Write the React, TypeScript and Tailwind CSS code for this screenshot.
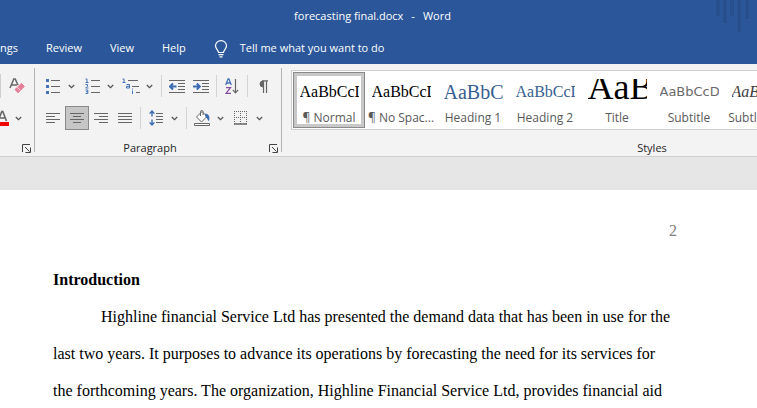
import type { ReactNode } from "react"

const TABS = ["ngs", "Review", "View", "Help"]

interface StyleItem {
  name: string
  sample: string
  className: string
  selected?: boolean
}

const STYLES: StyleItem[] = [
  { name: "¶ Normal", sample: "AaBbCcDd", className: "font-['Liberation_Serif',serif] text-[16px] leading-[26px] text-black", selected: true },
  { name: "¶ No Spac...", sample: "AaBbCcDd", className: "font-['Liberation_Serif',serif] text-[16px] leading-[26px] text-black" },
  { name: "Heading 1", sample: "AaBbC", className: "font-['Liberation_Serif',serif] text-[20px] leading-[26px] text-[#365f91]" },
  { name: "Heading 2", sample: "AaBbCcDd", className: "font-['Liberation_Serif',serif] text-[16px] leading-[26px] text-[#365f91]" },
  { name: "Title", sample: "AaB", className: "font-['Liberation_Serif',serif] text-[36px] leading-4 text-black" },
  { name: "Subtitle", sample: "AaBbCcD", className: "font-['DejaVu_Sans',sans-serif] text-[13px] leading-[26px] text-[#6a6a6a]" },
  { name: "Subtle Em...", sample: "AaBbCcDd", className: "font-['Liberation_Serif',serif] text-[16px] leading-[26px] italic text-[#404040]" },
]

function Icon({ w = 16, h = 16, children }: { w?: number; h?: number; children: ReactNode }) {
  return (
    <svg width={w} height={h} viewBox={`0 0 ${w} ${h}`} fill="none" stroke="#666" aria-hidden="true" className="shrink-0">
      {children}
    </svg>
  )
}

function Tool({ label, pressed, children }: { label: string; pressed?: boolean; children: ReactNode }) {
  return (
    <button
      type="button"
      aria-label={label}
      aria-pressed={pressed}
      className={`flex h-6 w-6 shrink-0 items-center justify-center ${pressed ? "border border-[#8a8a8a] bg-[#c6c6c6]" : "hover:bg-[#dcdcdc]"}`}
    >
      {children}
    </button>
  )
}

function Arrow({ label }: { label: string }) {
  return (
    <button type="button" aria-label={label} className="flex h-6 w-[15px] shrink-0 items-center pl-[3px]">
      <Icon w={7} h={5}>
        <path d="M.8 1l2.7 2.6L6.2 1" stroke="#555" strokeWidth="1.3" />
      </Icon>
    </button>
  )
}

function Divider() {
  return <span className="mx-[3px] h-[22px] w-px shrink-0 bg-[#d4d4d4]" />
}

function Launcher({ label }: { label: string }) {
  return (
    <button type="button" aria-label={label} className="shrink-0">
      <Icon w={9} h={9}>
        <path d="M.5 8V.5H8M3 3l4.5 4.5M8.5 3.5v5h-5" stroke="#444" />
      </Icon>
    </button>
  )
}

// lines: [x1, x2] for each row of text
function AlignIcon({ lines }: { lines: [number, number][] }) {
  return (
    <Icon w={14} h={12}>
      {lines.map(([a, b], i) => (
        <path key={i} d={`M${a} ${i * 3 + 1.5}H${b}`} />
      ))}
    </Icon>
  )
}

function GroupLine() {
  return <div className="my-1 w-px shrink-0 bg-[#b4b4b4]" />
}

function FontGroup() {
  return (
    <section className="flex w-[34px] shrink-0 flex-col">
      <div className="flex h-[34px] items-end">
        <span className="h-6 w-px bg-[#cfcfcf]" />
        <span className="w-1" />
        <Tool label="Clear formatting">
          <Icon>
            <path d="M1 10L4.8 1h1.4L9 7M2.5 7H8" strokeWidth="1.5" />
            <path d="M6 11.5L12.4 5.4l3 3L9 14.8z" fill="#e5809a" stroke="#e5809a" />
            <path d="M8.3 9.2l3 3.2" stroke="#f7d7df" />
          </Icon>
        </Tool>
      </div>
      <div className="mt-2 flex">
        <button type="button" aria-label="Font color" className="flex h-6 w-3 items-center">
          <Icon w={9} h={16}>
            <path d="M-2 11L1.8 1.5h1L6.5 11M-1 8h6" strokeWidth="1.6" />
            <path d="M0 14h9" stroke="#f00505" strokeWidth="4" />
          </Icon>
        </button>
        <Arrow label="Font color options" />
      </div>
      <div className="mt-auto flex h-4 items-center justify-end pr-[3px]">
        <Launcher label="Font settings" />
      </div>
    </section>
  )
}

function ParagraphGroup() {
  return (
    <section className="flex w-[246px] shrink-0 flex-col pt-[10px]">
      <div className="flex items-center pl-[6px]">
        <Tool label="Bullets">
          <Icon w={14}>
            <path d="M5 2.5h9M5 8.5h9M5 14.5h9" />
            <path d="M0 2.5h3M0 8.5h3M0 14.5h3" stroke="#4472b8" strokeWidth="3" />
          </Icon>
        </Tool>
        <Arrow label="Bullet options" />
        <Tool label="Numbering">
          <Icon w={15}>
            <path d="M6 2.5h9M6 8.5h9M6 14.5h9" />
            <path d="M.5 1H2v3.5M.5 4.5h3M.5 6.5h2v1.7L.7 10h2.8M.5 12h2.3v3.5H.5M1 13.7h1.8" stroke="#4472b8" />
          </Icon>
        </Tool>
        <Arrow label="Numbering options" />
        <Tool label="Multilevel list">
          <Icon w={18}>
            <path d="M6 2.5h10M10 8.5h7M14 14.5h4" />
            <path d="M.5 1H2v3.5M.5 4.5h3M4.5 6.5h3v3.5h-3V8.3h3M10.5 12.5v3.5M10.5 10.5v1" stroke="#4472b8" />
          </Icon>
        </Tool>
        <Arrow label="Multilevel options" />
        <Divider />
        <Tool label="Decrease indent">
          <Icon h={14}>
            <path d="M0 1.5h16M9 4.5h7M9 7.5h7M9 10.5h7M0 13.5h16" />
            <path d="M7.5 7.5h-6M4 4.5l-3 3 3 3" stroke="#3b6cb3" strokeWidth="2" />
          </Icon>
        </Tool>
        <Tool label="Increase indent">
          <Icon h={14}>
            <path d="M0 1.5h16M9 4.5h7M9 7.5h7M9 10.5h7M0 13.5h16" />
            <path d="M0 7.5h6M3.8 4.5l3 3-3 3" stroke="#3b6cb3" strokeWidth="2" />
          </Icon>
        </Tool>
        <Divider />
        <Tool label="Sort">
          <Icon w={14}>
            <path d="M.7 7L3.1.8h.8L6.3 7M1.7 5h3.6" stroke="#4472b8" strokeWidth="1.3" />
            <path d="M1 9.6h4.5L1 15.4h5" stroke="#8650a0" strokeWidth="1.3" />
            <path d="M10.5 1v14M7.8 11.8l2.7 3 2.7-3" strokeWidth="1.2" />
          </Icon>
        </Tool>
        <Divider />
        <Tool label="Show paragraph marks">
          <Icon w={10} h={13}>
            <path d="M5 1a3 3 0 000 6z" fill="#666" />
            <path d="M4 .8h6M5.5 1v12M8.5 1v12" strokeWidth="1.2" />
          </Icon>
        </Tool>
      </div>

      <div className="mt-2 flex items-center pl-[6px]">
        <Tool label="Align left">
          <AlignIcon lines={[[0, 14], [0, 9], [0, 14], [0, 9]]} />
        </Tool>
        <Tool label="Center" pressed>
          <AlignIcon lines={[[0, 14], [3, 11], [0, 14], [3, 11]]} />
        </Tool>
        <Tool label="Align right">
          <AlignIcon lines={[[0, 14], [5, 14], [0, 14], [5, 14]]} />
        </Tool>
        <Tool label="Justify">
          <AlignIcon lines={[[0, 14], [0, 14], [0, 14], [0, 14]]} />
        </Tool>
        <Divider />
        <Tool label="Line spacing">
          <Icon w={14}>
            <path d="M7 3.5h7M7 6.5h7M7 9.5h7M7 12.5h7" />
            <path d="M3 1v5.5M3 9.5V15M.6 3.6L3 1l2.4 2.6M.6 12.4L3 15l2.4-2.6" stroke="#3b6cb3" strokeWidth="1.4" />
          </Icon>
        </Tool>
        <Arrow label="Line spacing options" />
        <Divider />
        <Tool label="Shading">
          <Icon>
            <path d="M2.5 7L8 1.5l5 5L7.5 12zM6.5 6V1.8a1.3 1.3 0 012.6 0V5" fill="#fff" />
            <path d="M11.5 4c3 .3 4 2.5 3.2 6.500-.9-1.500-1.400-2.700-2.700-3.700z" fill="#3b6cb3" stroke="#3b6cb3" />
            <path d="M.5 13.5h15v2H.5z" fill="#fff" />
          </Icon>
        </Tool>
        <Arrow label="Shading options" />
        <Tool label="Borders">
          <Icon w={14} h={14}>
            <path d="M.5 0v13M6.5 0v13M12.5 0v13M0 .5h13M0 6.5h13" strokeDasharray="1 1" />
            <path d="M0 13h13" strokeWidth="1.5" />
          </Icon>
        </Tool>
        <Arrow label="Border options" />
      </div>

      <div className="mt-auto flex h-4 items-center pr-[3px]">
        <h2 className="flex-1 pr-1 text-center text-[11px] leading-4 text-[#262626]">Paragraph</h2>
        <Launcher label="Paragraph settings" />
      </div>
    </section>
  )
}

function StyleCard({ item }: { item: StyleItem }) {
  return (
    <button
      type="button"
      className={`flex h-14 w-[72px] shrink-0 flex-col items-center ${item.selected ? "border border-[#8a8a8a] ring-3 ring-inset ring-[#c8c8c8]" : "border border-transparent"}`}
    >
      <span className={`mt-[6px] flex h-6 w-[59px] items-start overflow-hidden whitespace-nowrap ${item.className}`}>
        {item.sample}
      </span>
      <span className="mt-[7px] whitespace-nowrap text-[12px] leading-4 text-[#595959]">{item.name}</span>
    </button>
  )
}

function StylesGroup() {
  return (
    <section className="flex w-[740px] shrink-0 flex-col pt-[6px] pl-[9px]">
      <div className="flex border border-[#cfcfcf] bg-white p-px">
        {STYLES.map((item) => (
          <StyleCard key={item.name} item={item} />
        ))}
      </div>
      <h2 className="mt-auto pr-[9px] text-center text-[11px] leading-4 text-[#262626]">Styles</h2>
    </section>
  )
}

function TitleBar() {
  return (
    <header className="relative shrink-0 bg-[#2b579a] text-white">
      <svg width="36" height="34" viewBox="0 0 36 34" className="absolute top-0 right-[6px]" fill="#264f8b" aria-hidden="true">
        <path d="M1 0h4v16H1zM8 0h4v23H8zM15 0h4v16h-4zM22 0h4v32h-4zM30 0h4v19h-4z" />
      </svg>
      <h1 className="flex h-[33px] items-center justify-center gap-2 pr-3 text-[11px]">
        <span>forecasting final.docx</span>
        <span>-</span>
        <span>Word</span>
      </h1>
      <nav className="flex h-[31px] items-center gap-7 text-[11px]">
        {TABS.map((tab) => (
          <a key={tab} href="#" className="whitespace-nowrap">
            {tab}
          </a>
        ))}
        <a href="#" className="flex items-center gap-3 whitespace-nowrap">
          <svg width="14" height="18" viewBox="0 0 14 18" fill="none" stroke="#fff" strokeWidth="1.2" aria-hidden="true">
            <path d="M4.5 12.5c0-2.5-3-3.5-3-6.7a5.5 5.2 0 0111 0c0 3.2-3 4.2-3 6.7zM4.5 14.7h5M5.5 16.8h3" />
          </svg>
          Tell me what you want to do
        </a>
      </nav>
    </header>
  )
}

export default function App() {
  return (
    <div className="flex h-screen flex-col overflow-hidden bg-[#e6e6e6] font-['Open_Sans',sans-serif]">
      <TitleBar />
      <div className="flex h-[93px] shrink-0 overflow-hidden border-b border-[#cfcfcf] bg-[#f3f3f3]">
        <FontGroup />
        <GroupLine />
        <ParagraphGroup />
        <GroupLine />
        <StylesGroup />
      </div>
      <main className="mt-[33px] flex-1 bg-white pt-[22px] pl-[53px] font-['Liberation_Serif',serif] text-[16px] text-black">
        <div className="max-w-[624px]">
          <p className="text-right leading-[37px] text-[#808080]">2</p>
          <h2 className="mt-3 leading-[37px] font-bold">Introduction</h2>
          <p className="indent-12 leading-[37px]">
            Highline financial Service Ltd has presented the demand data that has been in use for the last two years. It
            purposes to advance its operations by forecasting the need for its services for the forthcoming years. The
            organization, Highline Financial Service Ltd, provides financial aid
          </p>
        </div>
      </main>
    </div>
  )
}
